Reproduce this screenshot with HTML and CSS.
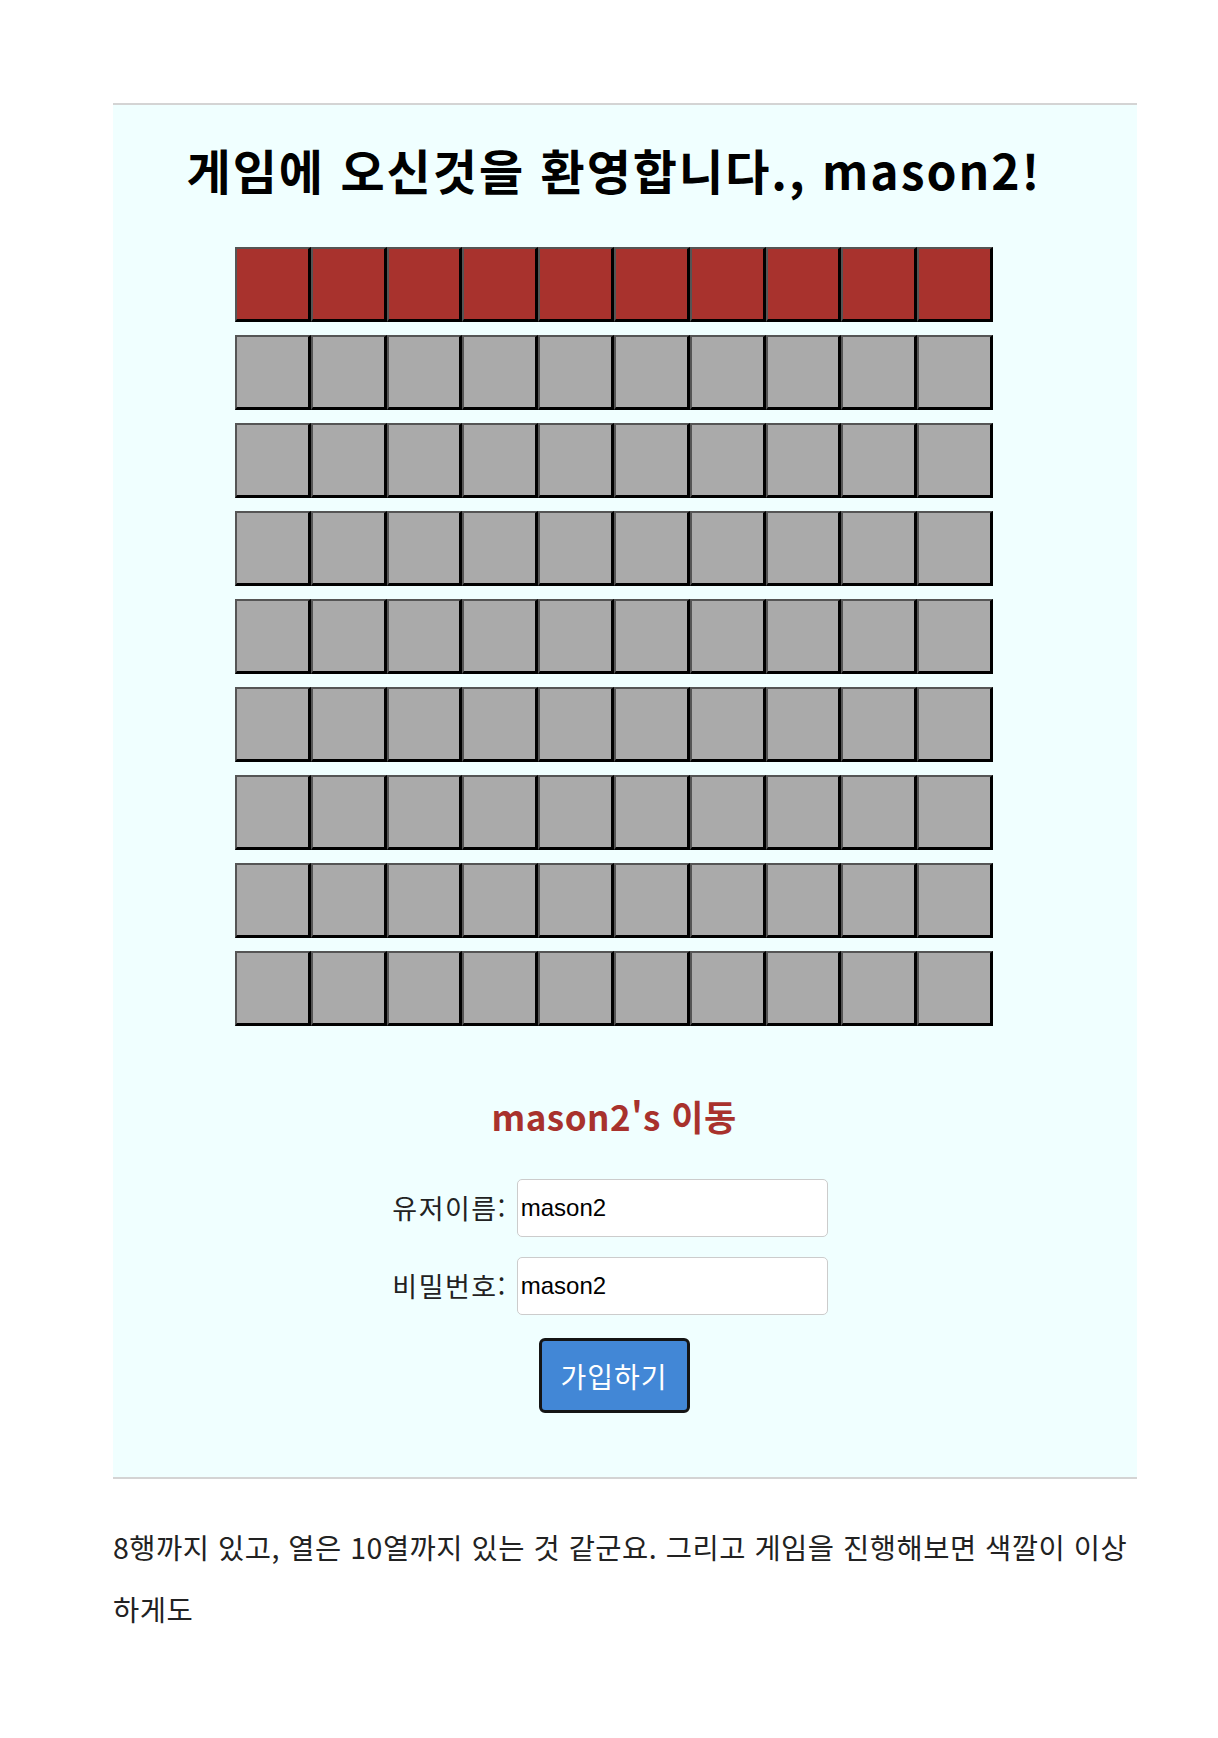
FILE: index.html
```html
<!DOCTYPE html>
<html lang="ko">
<head>
<meta charset="utf-8">
<title>게임</title>
<link rel="stylesheet" href="styles.css">
</head>
<body>
<div class="page">
  <section class="panel">
    <h1 class="title">게임에 오신것을 환영합니다., mason2!</h1>
    <div class="board">
      <div class="row">
        <div class="cell red"></div><div class="cell red"></div><div class="cell red"></div><div class="cell red"></div><div class="cell red"></div><div class="cell red"></div><div class="cell red"></div><div class="cell red"></div><div class="cell red"></div><div class="cell red"></div>
      </div>
      <div class="row">
        <div class="cell"></div><div class="cell"></div><div class="cell"></div><div class="cell"></div><div class="cell"></div><div class="cell"></div><div class="cell"></div><div class="cell"></div><div class="cell"></div><div class="cell"></div>
      </div>
      <div class="row">
        <div class="cell"></div><div class="cell"></div><div class="cell"></div><div class="cell"></div><div class="cell"></div><div class="cell"></div><div class="cell"></div><div class="cell"></div><div class="cell"></div><div class="cell"></div>
      </div>
      <div class="row">
        <div class="cell"></div><div class="cell"></div><div class="cell"></div><div class="cell"></div><div class="cell"></div><div class="cell"></div><div class="cell"></div><div class="cell"></div><div class="cell"></div><div class="cell"></div>
      </div>
      <div class="row">
        <div class="cell"></div><div class="cell"></div><div class="cell"></div><div class="cell"></div><div class="cell"></div><div class="cell"></div><div class="cell"></div><div class="cell"></div><div class="cell"></div><div class="cell"></div>
      </div>
      <div class="row">
        <div class="cell"></div><div class="cell"></div><div class="cell"></div><div class="cell"></div><div class="cell"></div><div class="cell"></div><div class="cell"></div><div class="cell"></div><div class="cell"></div><div class="cell"></div>
      </div>
      <div class="row">
        <div class="cell"></div><div class="cell"></div><div class="cell"></div><div class="cell"></div><div class="cell"></div><div class="cell"></div><div class="cell"></div><div class="cell"></div><div class="cell"></div><div class="cell"></div>
      </div>
      <div class="row">
        <div class="cell"></div><div class="cell"></div><div class="cell"></div><div class="cell"></div><div class="cell"></div><div class="cell"></div><div class="cell"></div><div class="cell"></div><div class="cell"></div><div class="cell"></div>
      </div>
      <div class="row">
        <div class="cell"></div><div class="cell"></div><div class="cell"></div><div class="cell"></div><div class="cell"></div><div class="cell"></div><div class="cell"></div><div class="cell"></div><div class="cell"></div><div class="cell"></div>
      </div>
    </div>
    <h2 class="move">mason2's 이동</h2>
    <form class="form">
      <div class="field">
        <label class="label" for="user">유저이름:</label>
        <input class="input" id="user" type="text" value="mason2">
      </div>
      <div class="field">
        <label class="label" for="pass">비밀번호:</label>
        <input class="input" id="pass" type="text" value="mason2">
      </div>
      <button class="btn" type="button">가입하기</button>
    </form>
  </section>
  <p class="note">8행까지 있고, 열은 10열까지 있는 것 같군요. 그리고 게임을 진행해보면 색깔이 이상하게도</p>
</div>
</body>
</html>
```
FILE: styles.css
```css
html, body {
  margin: 0;
  padding: 0;
  background: #ffffff;
}

body {
  font-family: "Noto Sans CJK KR", "Noto Sans", sans-serif;
  color: #222;
}

.page {
  width: 1024px;
  margin-left: 113px;
  padding-top: 103px;
  padding-bottom: 60px;
}

.panel {
  background: #f0ffff;
  border-top: 2px solid #d4d4d4;
  border-bottom: 2px solid #d4d4d4;
  padding: 0 22px 64px 0;
  display: flex;
  flex-direction: column;
  align-items: center;
}

.title {
  margin: 34px 0 0;
  font-size: 48px;
  line-height: 60px;
  letter-spacing: 2px;
  font-weight: 700;
  color: #000;
  white-space: nowrap;
}

.board {
  margin-top: 48px;
  width: 758px;
  display: flex;
  flex-direction: column;
  gap: 13px;
}

.row {
  display: flex;
}

.cell {
  flex: 1;
  height: 75px;
  box-sizing: border-box;
  border-style: solid;
  border-width: 2px 3px 3px 2px;
  border-color: #555 #000 #000 #555;
  background: #aaaaaa;
}

.cell.red {
  background: #a8322d;
}

.move {
  margin: 70px 0 0;
  font-size: 35px;
  line-height: 40px;
  letter-spacing: 0.5px;
  font-weight: 700;
  color: #a8322d;
}

.form {
  margin-top: 43px;
  display: flex;
  flex-direction: column;
  align-items: center;
  gap: 20px;
}

.field {
  display: flex;
  align-items: center;
  gap: 10px;
  padding-right: 8px;
}

.label {
  font-size: 27px;
  line-height: 40px;
  letter-spacing: 1.5px;
  color: #222;
}

.input {
  width: 311px;
  height: 58px;
  box-sizing: border-box;
  border: 1px solid #cccccc;
  border-radius: 5px;
  padding: 0 3px;
  background: #fff;
  font-family: "Liberation Sans", Arial, sans-serif;
  font-size: 24px;
  color: #000;
  outline: none;
}

.btn {
  margin-top: 3px;
  width: 151px;
  height: 75px;
  box-sizing: border-box;
  background: #4287d6;
  border: 3px solid #151515;
  border-radius: 6px;
  color: #fff;
  font-family: "Noto Sans CJK KR", sans-serif;
  font-size: 28px;
  letter-spacing: 1px;
  padding: 0;
}

.note {
  margin: 37px 0 0;
  font-size: 28.5px;
  line-height: 62px;
  letter-spacing: 0.5px;
  color: #222;
}
```
